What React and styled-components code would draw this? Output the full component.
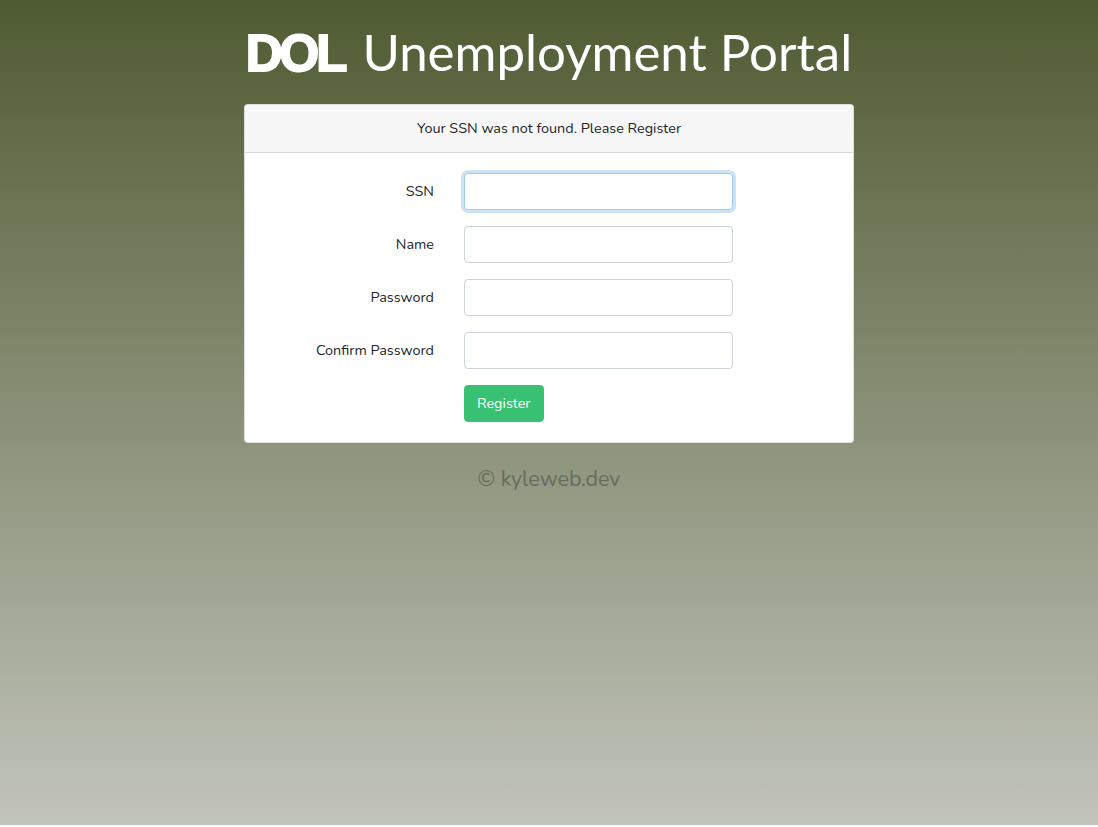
import React from "react";
import styled, { createGlobalStyle } from "styled-components";

const Global = createGlobalStyle`
  html, body { margin: 0; padding: 0; background: #f8fafc; }
  body { font-family: "Nunito", Lato, "Open Sans", sans-serif; color: #212529; }
  * { box-sizing: border-box; }
`;

const Page = styled.div`
  height: 825px;
  background: linear-gradient(to bottom, #4f5b32 0%, #c2c4bb 100%);
  display: flex;
  flex-direction: column;
  align-items: center;
`;

const Title = styled.h1`
  margin: 26px 0 0;
  height: 78px;
  font-family: Lato, sans-serif;
  font-weight: 400;
  font-size: 51px;
  line-height: 52px;
  color: #fff;
  display: flex;
  align-items: baseline;
  gap: 18px;
`;

const Logo = styled.span`
  font-family: "Liberation Sans", Arial, sans-serif;
  font-weight: 900;
  font-size: 51px;
  letter-spacing: -3px;
  -webkit-text-stroke: 2px #fff;
`;

const Card = styled.div`
  width: 610px;
  background: #fff;
  border: 1px solid rgba(0, 0, 0, 0.125);
  border-radius: 4px;
  overflow: hidden;
`;

const CardHeader = styled.div`
  background: #f7f7f7;
  border-bottom: 1px solid rgba(0, 0, 0, 0.125);
  padding: 12px 20px;
  text-align: center;
  font-size: 14.4px;
  line-height: 23px;
`;

const CardBody = styled.div`
  padding: 20px;
  display: flex;
  flex-direction: column;
  gap: 16px;
`;

const Row = styled.div`
  display: grid;
  grid-template-columns: 169px 269px;
  column-gap: 30px;
  align-items: center;
`;

const Label = styled.label`
  text-align: right;
  font-size: 14.4px;
  line-height: 23px;
`;

const Input = styled.input`
  height: 37px;
  width: 269px;
  border: 1px solid ${(p) => (p.$focused ? "#a1cbef" : "#ced4da")};
  border-radius: 4px;
  padding: 6px 12px;
  font: inherit;
  outline: none;
  box-shadow: ${(p) => (p.$focused ? "0 0 0 3px rgba(52, 144, 220, 0.25)" : "none")};
`;

const Button = styled.button`
  grid-column: 2;
  justify-self: start;
  height: 37px;
  padding: 6px 12px;
  background: #38c172;
  border: 1px solid #38c172;
  border-radius: 4px;
  color: #fff;
  font-family: inherit;
  font-size: 14.4px;
  line-height: 23px;
`;

const Footer = styled.div`
  margin-top: 21px;
  font-size: 21.5px;
  color: #666c5e;
`;

const fields = [
  { label: "SSN", type: "text", focused: true },
  { label: "Name", type: "text" },
  { label: "Password", type: "password" },
  { label: "Confirm Password", type: "password" },
];

export default function App() {
  return (
    <>
      <Global />
      <Page>
        <Title>
          <Logo>DOL</Logo>
          <span>Unemployment Portal</span>
        </Title>
        <Card>
          <CardHeader>Your SSN was not found. Please Register</CardHeader>
          <CardBody>
            {fields.map((f) => (
              <Row key={f.label}>
                <Label>{f.label}</Label>
                <Input type={f.type} $focused={f.focused} />
              </Row>
            ))}
            <Row>
              <Button>Register</Button>
            </Row>
          </CardBody>
        </Card>
        <Footer>© kyleweb.dev</Footer>
      </Page>
    </>
  );
}
